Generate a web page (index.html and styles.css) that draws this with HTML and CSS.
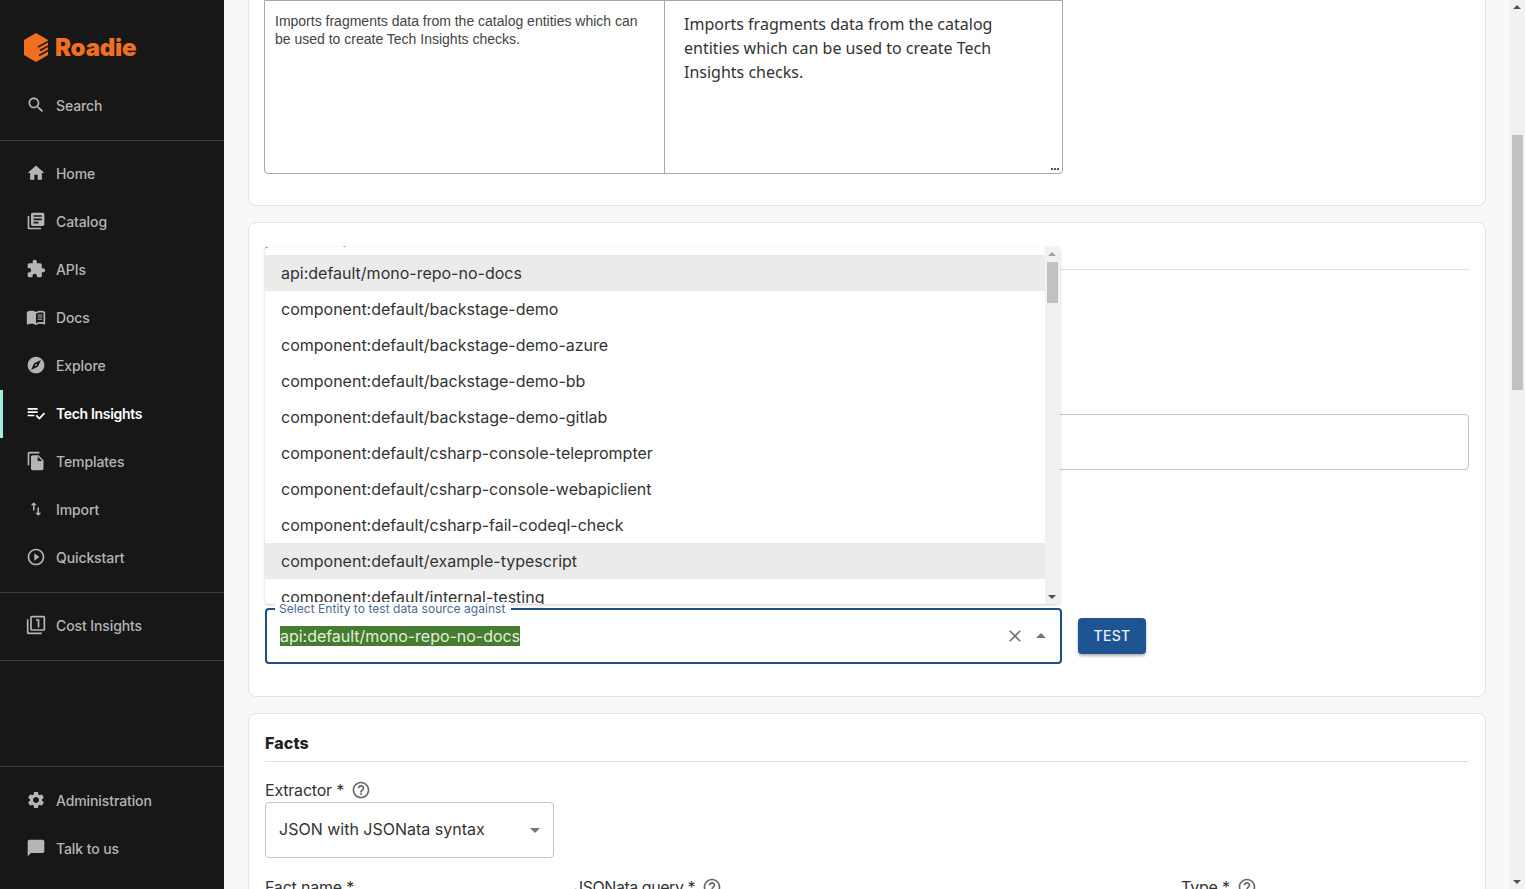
FILE: index.html
```html
<!DOCTYPE html>
<html lang="en">
<head>
<meta charset="utf-8">
<title>Roadie Tech Insights</title>
<link rel="stylesheet" href="styles.css">
</head>
<body>
<div class="app">
  <nav class="sidebar">
    <div class="logo">
      <svg class="logo-mark" viewBox="0 0 24 29"><path fill="#f26f21" d="M12 0l12 7v15l-12 7L0 22V7z"/><path fill="none" stroke="#171717" stroke-width="1.500" d="M25 8l-11 6M25 12.500l-9 5M25 17l-10 5.500"/></svg>
      <span class="logo-text">Roadie</span>
    </div>
    <a class="item"><svg class="ico" viewBox="0 0 24 24"><path d="M15.500 14h-.79l-.28-.27C15.410 12.590 16 11.110 16 9.500 16 5.910 13.090 3 9.500 3S3 5.910 3 9.500 5.910 16 9.500 16c1.610 0 3.090-.59 4.230-1.570l.27.28v.79l5 4.990L20.490 19l-4.990-5zm-6 0C7.010 14 5 11.990 5 9.500S7.010 5 9.500 5 14 7.010 14 9.500 11.990 14 9.500 14z"/></svg>Search</a>
    <div class="rule rule-a"></div>
    <a class="item"><svg class="ico" viewBox="0 0 24 24"><path d="M10 20v-6h4v6h5v-8h3L12 3 2 12h3v8z"/></svg>Home</a>
    <a class="item"><svg class="ico" viewBox="0 0 24 24"><path d="M4 6H2v14c0 1.100.9 2 2 2h14v-2H4V6zm16-4H8c-1.100 0-2 .9-2 2v12c0 1.100.9 2 2 2h12c1.100 0 2-.9 2-2V4c0-1.100-.9-2-2-2zm-1 9H9V9h10v2zm-4 4H9v-2h6v2zm4-8H9V5h10v2z"/></svg>Catalog</a>
    <a class="item"><svg class="ico" viewBox="0 0 24 24"><path d="M20.500 11H19V7c0-1.100-.9-2-2-2h-4V3.500C13 2.120 11.880 1 10.500 1S8 2.120 8 3.500V5H4c-1.100 0-1.990.9-1.990 2v3.800H3.500c1.490 0 2.700 1.210 2.700 2.700s-1.210 2.700-2.700 2.700H2V20c0 1.100.9 2 2 2h3.800v-1.500c0-1.490 1.210-2.700 2.700-2.700 1.490 0 2.700 1.210 2.700 2.700V22H17c1.100 0 2-.9 2-2v-4h1.500c1.380 0 2.500-1.120 2.500-2.500S21.880 11 20.500 11z"/></svg>APIs</a>
    <a class="item"><svg class="ico" viewBox="0 0 24 24"><path d="M21 5c-1.110-.35-2.330-.5-3.500-.5-1.950 0-4.050.4-5.500 1.500-1.450-1.100-3.550-1.500-5.500-1.500S2.450 4.900 1 6v14.650c0 .25.25.5.5.5.1 0 .15-.05.25-.05C3.100 20.450 5.050 20 6.500 20c1.950 0 4.050.4 5.500 1.500 1.350-.85 3.800-1.500 5.500-1.500 1.650 0 3.350.3 4.750 1.050.1.05.15.05.25.05.25 0 .5-.25.5-.5V6c-.6-.45-1.250-.75-2-1zm0 13.500c-1.100-.35-2.300-.5-3.500-.5-1.700 0-4.150.65-5.500 1.500V8c1.350-.85 3.800-1.500 5.500-1.500 1.200 0 2.400.15 3.500.5v11.500z"/><path d="M14 9h5.500v1.200H14zM14 11.500h5.500v1.200H14zM14 14h5.500v1.200H14z"/></svg>Docs</a>
    <a class="item"><svg class="ico" viewBox="0 0 24 24"><path d="M12 10.900c-.61 0-1.100.49-1.100 1.100s.49 1.100 1.100 1.100c.61 0 1.100-.49 1.100-1.100s-.49-1.100-1.100-1.100zM12 2C6.480 2 2 6.480 2 12s4.480 10 10 10 10-4.480 10-10S17.520 2 12 2zm2.190 12.190L6 18l3.810-8.190L18 6l-3.810 8.190z"/></svg>Explore</a>
    <a class="item active"><svg class="ico" viewBox="0 0 24 24"><path d="M14 10H2v2h12v-2zm0-4H2v2h12V6zM2 16h8v-2H2v2zm19.500-4.500L23 13l-6.990 7-4.510-4.500L13 14l3.010 3 5.490-5.500z"/></svg>Tech Insights</a>
    <a class="item"><svg class="ico" viewBox="0 0 24 24"><path d="M16 1H4c-1.100 0-2 .9-2 2v14h2V3h12V1zm-1 4l6 6v10c0 1.100-.9 2-2 2H7.990C6.890 23 6 22.100 6 21l.01-14c0-1.100.89-2 1.990-2h7zm-1 7h5.500L14 6.500V12z"/></svg>Templates</a>
    <a class="item"><span class="ico-box"><svg class="ico-small" viewBox="0 0 24 24"><path d="M9 3L5 6.990h3V14h2V6.990h3L9 3zm7 14.010V10h-2v7.010h-3L15 21l4-3.990h-3z"/></svg></span>Import</a>
    <a class="item"><svg class="ico" viewBox="0 0 24 24"><path d="M10 16.500l6-4.500-6-4.500v9zM12 2C6.480 2 2 6.480 2 12s4.480 10 10 10 10-4.480 10-10S17.520 2 12 2zm0 18c-4.410 0-8-3.590-8-8s3.590-8 8-8 8 3.590 8 8-3.590 8-8 8z"/></svg>Quickstart</a>
    <div class="rule rule-b"></div>
    <a class="item"><svg class="ico" viewBox="0 0 24 24"><path d="M3 5H1v16c0 1.100.9 2 2 2h16v-2H3V5zm11 10h2V5h-4v2h2v8zm7-14H7c-1.100 0-2 .9-2 2v14c0 1.100.9 2 2 2h14c1.100 0 2-.9 2-2V3c0-1.100-.9-2-2-2zm0 16H7V3h14v14z"/></svg>Cost Insights</a>
    <div class="rule rule-c"></div>
    <div class="spring"></div>
    <div class="rule rule-d"></div>
    <a class="item"><svg class="ico" viewBox="0 0 24 24"><path d="M19.140 12.940c.04-.3.06-.61.06-.94 0-.32-.02-.64-.07-.94l2.030-1.580c.18-.14.23-.41.12-.61l-1.920-3.320c-.12-.22-.37-.29-.59-.22l-2.390.96c-.5-.38-1.030-.7-1.620-.94l-.36-2.540c-.04-.24-.24-.41-.48-.41h-3.840c-.24 0-.43.17-.47.41l-.36 2.540c-.59.24-1.130.57-1.620.94l-2.390-.96c-.22-.08-.47 0-.59.22L2.740 8.870c-.12.21-.08.47.12.61l2.030 1.580c-.05.3-.09.63-.09.94s.02.64.07.94l-2.030 1.580c-.18.14-.23.41-.12.61l1.920 3.320c.12.22.37.29.59.22l2.390-.96c.5.38 1.030.7 1.620.94l.36 2.540c.05.24.24.41.48.41h3.840c.24 0 .44-.17.47-.41l.36-2.540c.59-.24 1.130-.56 1.620-.94l2.390.96c.22.08.47 0 .59-.22l1.920-3.320c.12-.22.07-.47-.12-.61l-2.010-1.580zM12 15.600c-1.980 0-3.600-1.620-3.600-3.600s1.620-3.600 3.600-3.600 3.600 1.620 3.600 3.600-1.620 3.600-3.600 3.600z"/></svg>Administration</a>
    <a class="item"><svg class="ico" viewBox="0 0 24 24"><path d="M20 2H4c-1.100 0-2 .9-2 2v18l4-4h14c1.100 0 2-.9 2-2V4c0-1.100-.9-2-2-2z"/></svg>Talk to us</a>
  </nav>

  <main class="main">
    <section class="card card-top">
      <div class="split">
        <div class="pane-raw">Imports fragments data from the catalog entities which can be used to create Tech Insights checks.</div>
        <div class="pane-preview">Imports fragments data from the catalog entities which can be used to create Tech Insights checks.</div>
        <span class="grip"></span>
      </div>
    </section>

    <section class="card card-source">
      <h2 class="heading heading-source">Data provider</h2>
      <div class="wide-input"></div>
      <div class="entity-row">
        <div class="entity-field">
          <span class="float-label">Select Entity to test data source against</span>
          <span class="selected">api:default/mono-repo-no-docs</span>
          <svg class="clear" viewBox="0 0 24 24"><path d="M19 6.410L17.590 5 12 10.590 6.410 5 5 6.410 10.590 12 5 17.590 6.410 19 12 13.410 17.590 19 19 17.590 13.410 12z"/></svg>
          <svg class="caret" viewBox="0 0 24 24"><path d="M7 14l5-5 5 5z"/></svg>
        </div>
        <button class="test-btn">TEST</button>
      </div>
      <div class="popup">
        <ul class="options">
          <li class="option hl">api:default/mono-repo-no-docs</li>
          <li class="option">component:default/backstage-demo</li>
          <li class="option">component:default/backstage-demo-azure</li>
          <li class="option">component:default/backstage-demo-bb</li>
          <li class="option">component:default/backstage-demo-gitlab</li>
          <li class="option">component:default/csharp-console-teleprompter</li>
          <li class="option">component:default/csharp-console-webapiclient</li>
          <li class="option">component:default/csharp-fail-codeql-check</li>
          <li class="option hl">component:default/example-typescript</li>
          <li class="option">component:default/internal-testing</li>
        </ul>
        <div class="pop-scroll">
          <span class="arrow-up dark-small"></span>
          <span class="pop-thumb"></span>
          <span class="arrow-down dark-small"></span>
        </div>
      </div>
    </section>

    <section class="card card-facts">
      <h2 class="heading">Facts</h2>
      <div class="label-row">Extractor *<svg class="help" viewBox="0 0 24 24"><path d="M11 18h2v-2h-2v2zm1-16C6.480 2 2 6.480 2 12s4.480 10 10 10 10-4.480 10-10S17.520 2 12 2zm0 18c-4.410 0-8-3.590-8-8s3.590-8 8-8 8 3.590 8 8-3.590 8-8 8zm0-14c-2.210 0-4 1.790-4 4h2c0-1.100.9-2 2-2s2 .9 2 2c0 2-3 1.750-3 5h2c0-2.250 3-2.500 3-5 0-2.210-1.790-4-4-4z"/></svg></div>
      <div class="select-box">JSON with JSONata syntax<svg class="select-caret" viewBox="0 0 24 24"><path d="M7 10l5 5 5-5z"/></svg></div>
      <div class="fact-row">
        <div class="label-row col-name">Fact name *</div>
        <div class="label-row col-query">JSONata query *<svg class="help" viewBox="0 0 24 24"><path d="M11 18h2v-2h-2v2zm1-16C6.480 2 2 6.480 2 12s4.480 10 10 10 10-4.480 10-10S17.520 2 12 2zm0 18c-4.410 0-8-3.590-8-8s3.590-8 8-8 8 3.590 8 8-3.590 8-8 8zm0-14c-2.210 0-4 1.790-4 4h2c0-1.100.9-2 2-2s2 .9 2 2c0 2-3 1.750-3 5h2c0-2.250 3-2.500 3-5 0-2.210-1.790-4-4-4z"/></svg></div>
        <div class="label-row">Type *<svg class="help" viewBox="0 0 24 24"><path d="M11 18h2v-2h-2v2zm1-16C6.480 2 2 6.480 2 12s4.480 10 10 10 10-4.480 10-10S17.520 2 12 2zm0 18c-4.410 0-8-3.590-8-8s3.590-8 8-8 8 3.590 8 8-3.590 8-8 8zm0-14c-2.210 0-4 1.790-4 4h2c0-1.100.9-2 2-2s2 .9 2 2c0 2-3 1.750-3 5h2c0-2.250 3-2.500 3-5 0-2.210-1.790-4-4-4z"/></svg></div>
      </div>
    </section>
  </main>

  <div class="page-scroll">
    <span class="arrow-up dark"></span>
    <span class="page-thumb"></span>
    <span class="arrow-down dark"></span>
  </div>
</div>
</body>
</html>
```

FILE: styles.css
```css
* { box-sizing: border-box; }
html, body { margin: 0; height: 100%; overflow: hidden; }
body { font-family: Inter, "Liberation Sans", sans-serif; color: #2b2b2b; background: #f8f8f8; }
.app { display: flex; height: 889px; overflow: hidden; }

/* sidebar */
.sidebar { width: 224px; flex: none; background: #171717; display: flex; flex-direction: column; height: 889px; padding-bottom: 17px; }
.logo { height: 81px; padding: 33px 0 0 24px; display: flex; align-items: flex-start; }
.logo-mark { width: 24px; height: 29px; flex: none; }
.logo-text { font-family: Inter, sans-serif; font-weight: 900; font-size: 24px; line-height: 29px; color: #f26f21; margin-left: 7px; letter-spacing: -0.2px; }
.item { height: 48px; flex: none; display: flex; align-items: center; padding-left: 26px; font-size: 14px; font-weight: 500; letter-spacing: -0.1px; color: #b5b5b5; position: relative; }
.ico { width: 20px; height: 20px; fill: #b5b5b5; margin-right: 10px; flex: none; }
.ico-box { width: 20px; height: 20px; margin-right: 10px; display: flex; align-items: center; justify-content: center; flex: none; }
.ico-small { width: 18px; height: 18px; fill: #b5b5b5; }
.active { color: #fff; font-weight: 600; letter-spacing: -0.33px; }
.active::before { content: ""; position: absolute; left: 0; top: 1px; width: 3px; height: 48px; background: #9bf0e1; }
.active .ico { fill: #fff; }
.rule { height: 1px; background: #3a3a3a; flex: none; }
.rule-a { margin: 11px 0 8px; }
.rule-b { margin: 11px 0 8px; }
.rule-c { margin-top: 11px; }
.spring { flex: 1; }
.rule-d { margin-bottom: 9px; }

/* main */
.main { flex: 1; min-width: 0; padding: 0 24px; display: flex; flex-direction: column; gap: 16px; }
.card { background: #fff; border: 1px solid #e4e4e4; border-radius: 8px; padding: 0 16px; flex: none; position: relative; }
.card-top { height: 206px; border-top: 0; border-radius: 0 0 8px 8px; }
.split { display: flex; width: 799px; height: 174px; margin-left: -1px; border: 1px solid #a8a8a8; border-radius: 0 0 4px 4px; position: relative; }
.pane-raw { width: 400px; flex: none; border-right: 1px solid #a8a8a8; padding: 11px 10px; font-family: "Liberation Sans", Arial, sans-serif; font-size: 14px; line-height: 18px; color: #444; }
.pane-preview { flex: 1; padding: 11px 60px 0 19px; font-family: "Noto Sans", sans-serif; font-size: 16px; line-height: 24px; color: #333; }
.grip { position: absolute; right: 3px; bottom: 3px; width: 8px; height: 2px; background: repeating-linear-gradient(90deg, #555 0 2px, transparent 2px 3px); }

.heading { margin: 0; height: 48px; border-bottom: 1px solid #e0e0e0; font-family: Inter, sans-serif; font-size: 16px; font-weight: 800; line-height: 24px; padding-top: 17px; color: #222; letter-spacing: 0.1px; }
.heading-source { height: 47px; padding-top: 18px; }
.wide-input { height: 56px; margin-top: 144px; border: 1px solid #c4c4c4; border-radius: 4px; }
.entity-row { display: flex; align-items: center; margin-top: 138px; padding-bottom: 32px; }
.entity-field { width: 797px; height: 56px; border: 2px solid #1f4e85; border-radius: 4px; position: relative; display: flex; align-items: center; padding-left: 13px; }
.float-label { position: absolute; left: 8px; top: -8px; padding: 0 6px 0 4px; background: #fff; font-size: 12px; letter-spacing: 0.05px; line-height: 14px; color: #4a6a94; white-space: nowrap; z-index: 2; }
.selected { background: #457c2f; color: #e3efdc; font-size: 16px; line-height: 20px; letter-spacing: -0.03px; }
.clear { position: absolute; right: 35px; top: 16px; width: 20px; height: 20px; fill: #757575; }
.caret { position: absolute; right: 7px; top: 14px; width: 24px; height: 24px; fill: #757575; }
.test-btn { width: 68px; height: 36px; margin-left: 16px; padding: 0 0 2px; border: 0; border-radius: 4px; background: #1f5493; color: #e8f0fa; font-family: Inter, sans-serif; font-size: 14px; font-weight: 500; letter-spacing: .3px; box-shadow: 0 2px 3px rgba(0,0,0,.3); }

.popup { position: absolute; left: 16px; top: 24px; width: 795px; height: 357px; background: #fff; border-radius: 4px; box-shadow: 0 1px 3px rgba(0,0,0,.2); overflow: hidden; display: flex; z-index: 1; }
.options { list-style: none; margin: 0; padding: 8px 0 0; flex: 1; min-width: 0; }
.option { height: 36px; line-height: 36px; padding-left: 16px; font-size: 16px; color: #333; white-space: nowrap; }
.hl { background: #ebebeb; }
.pop-scroll { width: 15px; background: #f1f1f1; position: relative; flex: none; }
.pop-thumb { position: absolute; left: 2px; top: 15px; width: 11px; height: 41px; background: #c1c1c1; }
.page-scroll { width: 15px; flex: none; height: 889px; background: #f1f1f1; position: relative; }
.page-thumb { position: absolute; left: 2px; top: 135px; width: 11px; height: 255px; background: #c1c1c1; }
.arrow-up, .arrow-down { position: absolute; left: 3px; width: 0; height: 0; border-left: 4px solid transparent; border-right: 4px solid transparent; }
.arrow-up { top: 5px; border-bottom: 4px solid #505050; }
.arrow-down { bottom: 5px; border-top: 4px solid #505050; }
.dark-small.arrow-up { border-bottom-color: #a0a0a0; }
.dark-small.arrow-down { border-top-color: #505050; }

.card-facts { height: 300px; }
.label-row { height: 24px; margin-top: 16px; font-size: 16px; line-height: 24px; letter-spacing: -0.2px; display: flex; align-items: center; color: #333; }
.help { width: 20px; height: 20px; fill: #666; margin-left: 7px; flex: none; }
.select-box { width: 289px; height: 56px; border: 1px solid #c4c4c4; border-radius: 4px; padding: 0 0 2px 13px; font-size: 16px; display: flex; align-items: center; position: relative; color: #333; }
.select-caret { position: absolute; right: 6px; top: 15px; width: 24px; height: 24px; fill: #757575; }
.fact-row { display: flex; margin-top: 1px; }
.col-name { width: 309px; flex: none; }
.col-query { width: 607px; flex: none; letter-spacing: -0.45px; }
```
